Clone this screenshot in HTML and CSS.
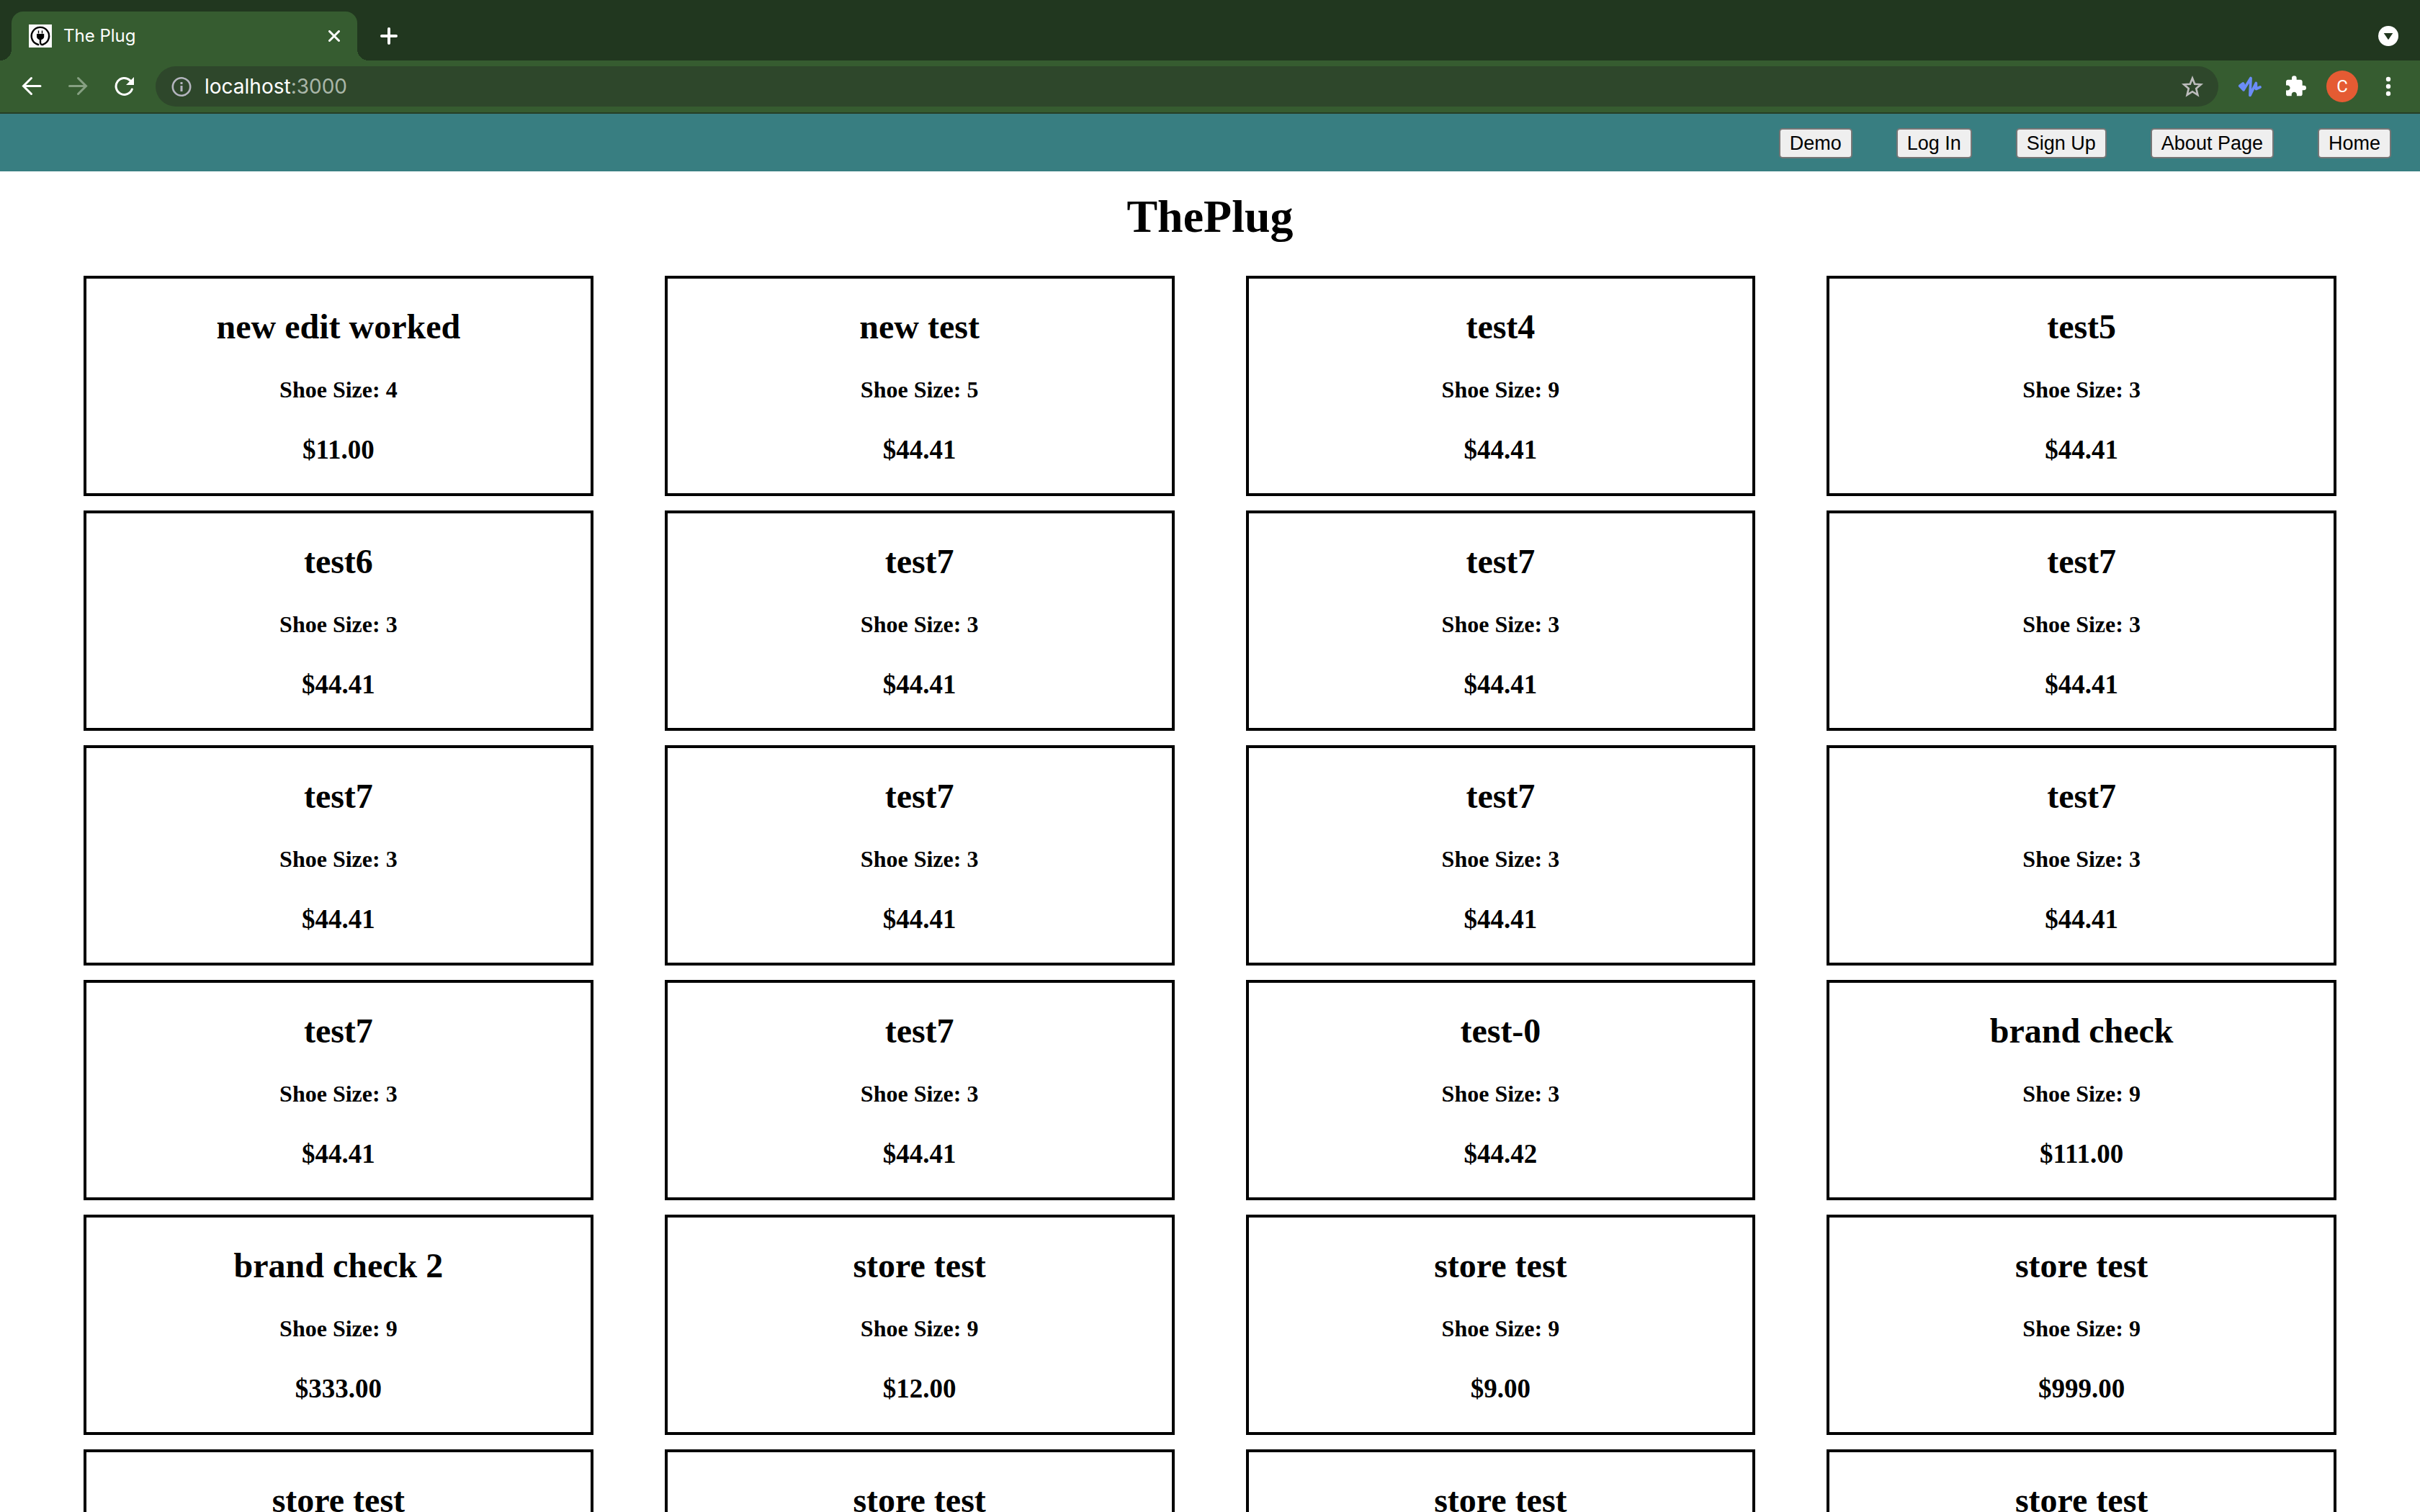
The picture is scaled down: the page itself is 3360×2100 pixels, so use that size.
FILE: index.html
```html
<!DOCTYPE html>
<html lang="en">
<head>
<meta charset="utf-8">
<title>The Plug</title>
<link rel="stylesheet" href="styles.css">
</head>
<body>
<header class="browser">
  <div class="tabstrip">
    <div class="tab">
      <svg class="favicon" viewBox="0 0 32 32" aria-hidden="true">
        <rect width="32" height="32" fill="#fafafa"/>
        <path d="M13.200 28A12.200 12.200 0 1 1 20 27.600C17.500 29 15.600 27 16 24V20" fill="none" stroke="#000" stroke-width="2.400" stroke-linecap="round"/>
        <path d="M13.500 8.500v4M18.500 8.500v4" stroke="#000" stroke-width="1.400"/>
        <path d="M11 13h10.200V17c0 2.500-2.500 4-5.100 4.800-2.600-.8-5.100-2.300-5.100-4.800z" fill="#000"/>
      </svg>
      <span class="tab-title">The Plug</span>
      <button class="icon-button" type="button" aria-label="Close tab">
        <svg class="icon-small" viewBox="0 0 16 16"><path d="M1.500 1.500l13 13M14.500 1.500l-13 13" fill="none" stroke="#fff" stroke-width="3" stroke-linecap="round"/></svg>
      </button>
    </div>
    <button class="icon-button new-tab" type="button" aria-label="New tab">
      <svg class="icon" viewBox="0 0 28 28"><path d="M14 4v20M4 14h20" fill="none" stroke="#fff" stroke-width="4" stroke-linecap="round"/></svg>
    </button>
    <button class="icon-button tab-search" type="button" aria-label="Search tabs">
      <svg class="icon" viewBox="0 0 28 28"><circle cx="14" cy="14" r="14" fill="#fff"/><path d="M7.700 10h12.600L14 19.300z" fill="#21371f"/></svg>
    </button>
  </div>
  <div class="toolbar">
    <div class="history">
      <button class="icon-button" type="button" aria-label="Back">
        <svg class="icon" viewBox="0 0 28 28"><path d="M26 13.500H3M13.500 2.500L2.500 13.500 13.500 24.500" fill="none" stroke="#fff" stroke-width="3" stroke-linecap="round"/></svg>
      </button>
      <button class="icon-button" type="button" aria-label="Forward">
        <svg class="icon" viewBox="0 0 28 28"><path d="M2.500 13.500H25M14.500 2.500L25.500 13.500 14.500 24.500" fill="none" stroke="#86a082" stroke-width="3" stroke-linecap="round"/></svg>
      </button>
      <button class="icon-button" type="button" aria-label="Reload">
        <svg class="icon" viewBox="0 0 28 28"><path d="M25.300 18A11.500 11.500 0 1 1 22.500 5.600" fill="none" stroke="#fff" stroke-width="3" stroke-linecap="round"/><path d="M28 1v11H17z" fill="#fff"/></svg>
      </button>
    </div>
    <div class="omnibox">
      <svg class="icon" viewBox="0 0 28 28" aria-hidden="true"><circle cx="14" cy="14.500" r="12.200" fill="none" stroke="#b4b5bf" stroke-width="2.600"/><path d="M14 13V21M14 8v3" stroke="#b4b5bf" stroke-width="3"/></svg>
      <span class="url">localhost<span class="port">:3000</span></span>
      <button class="icon-button" type="button" aria-label="Bookmark this page">
        <svg class="icon-large" viewBox="0 0 32 32"><path d="M16 4.500l3.200 8.200 8.600.6-6.600 5.600 2.200 9L16 23.200l-7.400 4.700 2.200-9-6.600-5.600 8.600-.6z" fill="none" stroke="#bdbdbd" stroke-width="2.600"/></svg>
      </button>
    </div>
    <div class="extensions">
      <button class="icon-button" type="button" aria-label="Audio extension">
        <svg class="icon-wave" viewBox="0 0 36 32"><path d="M3.800 15.300L8.200 12 9 20.800 3.800 15.300 8 16M9 20.800L19 4.500 18 28.300 26.300 11.500 26.500 19.500 32 17M9.500 19.500L9 13" fill="none" stroke="#6b8cf7" stroke-width="3.800" stroke-linecap="round" stroke-linejoin="round"/></svg>
      </button>
      <button class="icon-button" type="button" aria-label="Extensions">
        <svg class="icon-large" viewBox="-1 0 24 24"><path d="M20.500 11H19V7c0-1.100-.9-2-2-2h-4V3.500a2.500 2.500 0 0 0-5 0V5H4c-1.100 0-1.990.9-1.990 2v3.800H3.500c1.490 0 2.700 1.210 2.700 2.700s-1.210 2.700-2.700 2.700H2V20c0 1.100.9 2 2 2h3.800v-1.500c0-1.490 1.210-2.700 2.700-2.700s2.700 1.210 2.700 2.700V22H17c1.100 0 2-.9 2-2v-4h1.500a2.500 2.500 0 0 0 0-5z" fill="#fff"/></svg>
      </button>
      <button class="avatar" type="button">C</button>
      <button class="icon-button" type="button" aria-label="Menu">
        <svg class="icon" viewBox="0 0 28 28"><g fill="#fff"><circle cx="14" cy="4" r="3.200"/><circle cx="14" cy="14" r="3.200"/><circle cx="14" cy="24" r="3.200"/></g></svg>
      </button>
    </div>
  </div>
</header>
<nav class="site-nav">
  <button type="button">Demo</button>
  <button type="button">Log In</button>
  <button type="button">Sign Up</button>
  <button type="button">About Page</button>
  <button type="button">Home</button>
</nav>
<main class="page">
  <h1>ThePlug</h1>
  <div class="listings">
    <article class="card"><h2>new edit worked</h2><h4>Shoe Size: 4</h4><h3>$11.00</h3></article>
    <article class="card"><h2>new test</h2><h4>Shoe Size: 5</h4><h3>$44.41</h3></article>
    <article class="card"><h2>test4</h2><h4>Shoe Size: 9</h4><h3>$44.41</h3></article>
    <article class="card"><h2>test5</h2><h4>Shoe Size: 3</h4><h3>$44.41</h3></article>
    <article class="card"><h2>test6</h2><h4>Shoe Size: 3</h4><h3>$44.41</h3></article>
    <article class="card"><h2>test7</h2><h4>Shoe Size: 3</h4><h3>$44.41</h3></article>
    <article class="card"><h2>test7</h2><h4>Shoe Size: 3</h4><h3>$44.41</h3></article>
    <article class="card"><h2>test7</h2><h4>Shoe Size: 3</h4><h3>$44.41</h3></article>
    <article class="card"><h2>test7</h2><h4>Shoe Size: 3</h4><h3>$44.41</h3></article>
    <article class="card"><h2>test7</h2><h4>Shoe Size: 3</h4><h3>$44.41</h3></article>
    <article class="card"><h2>test7</h2><h4>Shoe Size: 3</h4><h3>$44.41</h3></article>
    <article class="card"><h2>test7</h2><h4>Shoe Size: 3</h4><h3>$44.41</h3></article>
    <article class="card"><h2>test7</h2><h4>Shoe Size: 3</h4><h3>$44.41</h3></article>
    <article class="card"><h2>test7</h2><h4>Shoe Size: 3</h4><h3>$44.41</h3></article>
    <article class="card"><h2>test-0</h2><h4>Shoe Size: 3</h4><h3>$44.42</h3></article>
    <article class="card"><h2>brand check</h2><h4>Shoe Size: 9</h4><h3>$111.00</h3></article>
    <article class="card"><h2>brand check 2</h2><h4>Shoe Size: 9</h4><h3>$333.00</h3></article>
    <article class="card"><h2>store test</h2><h4>Shoe Size: 9</h4><h3>$12.00</h3></article>
    <article class="card"><h2>store test</h2><h4>Shoe Size: 9</h4><h3>$9.00</h3></article>
    <article class="card"><h2>store test</h2><h4>Shoe Size: 9</h4><h3>$999.00</h3></article>
    <article class="card"><h2>store test</h2></article>
    <article class="card"><h2>store test</h2></article>
    <article class="card"><h2>store test</h2></article>
    <article class="card"><h2>store test</h2></article>
  </div>
</main>
</body>
</html>
```
FILE: styles.css
```css
* {
  box-sizing: border-box;
}

body {
  display: flex;
  flex-direction: column;
  height: 100vh;
  margin: 0;
  overflow: hidden;
  background: #fff;
  color: #000;
  font-family: "Liberation Serif", "Times New Roman", serif;
}

svg {
  display: block;
  flex: none;
}

/* Browser window */
.browser {
  flex: none;
  border-bottom: 2px solid #263f26;
  background: #365c30;
  color: #fff;
  font-family: Inter, Roboto, sans-serif;
}

.icon-button {
  display: flex;
  flex: none;
  padding: 0;
  border: 0;
  background: none;
}

.icon-small {
  width: 16px;
  height: 16px;
}

.icon {
  width: 28px;
  height: 28px;
}

.icon-large {
  width: 32px;
  height: 32px;
}

.icon-wave {
  width: 36px;
  height: 32px;
}

.tabstrip {
  display: flex;
  align-items: center;
  height: 84px;
  padding: 16px 30px 0 16px;
  background: #21371f;
}

.tab {
  position: relative;
  display: flex;
  align-items: center;
  gap: 16px;
  width: 480px;
  height: 68px;
  padding: 0 24px;
  border-radius: 16px 16px 0 0;
  background: #365c30;
}

/* Curved feet where the tab meets the toolbar */
.tab::before,
.tab::after {
  position: absolute;
  bottom: 0;
  width: 16px;
  height: 16px;
  content: "";
}

.tab::before {
  right: 100%;
  background: radial-gradient(circle at 0 0, #21371f 16px, #365c30 16px);
}

.tab::after {
  left: 100%;
  background: radial-gradient(circle at 100% 0, #21371f 16px, #365c30 16px);
}

.favicon {
  width: 32px;
  height: 32px;
}

.tab-title {
  flex: 1;
  font-size: 24px;
  line-height: 32px;
}

.new-tab {
  margin-left: 30px;
}

.tab-search {
  margin-left: auto;
}

.toolbar {
  display: flex;
  align-items: center;
  gap: 26px;
  height: 72px;
  padding: 0 30px;
}

.history {
  display: flex;
  gap: 36px;
  margin-right: 4px;
}

.omnibox {
  display: flex;
  flex: 1;
  align-items: center;
  gap: 18px;
  height: 56px;
  padding: 0 20px 0 22px;
  border-radius: 28px;
  background: #2e472b;
}

.url {
  flex: 1;
  font-size: 28px;
  line-height: 36px;
}

.port {
  color: #a9b6a8;
}

.extensions {
  display: flex;
  align-items: center;
  gap: 28px;
}

.avatar {
  width: 44px;
  height: 44px;
  padding: 0;
  border: 0;
  border-radius: 50%;
  background: #e55b33;
  color: #fff;
  font-family: Roboto, sans-serif;
  font-size: 24px;
  line-height: 44px;
}

/* Site */
.site-nav {
  display: flex;
  flex: none;
  align-items: center;
  justify-content: flex-end;
  gap: 61px;
  height: 80px;
  padding: 2px 40px 0;
  background: #387e81;
}

.site-nav button {
  height: 42px;
  padding: 0 13px;
  border: 2px solid #767676;
  border-radius: 5px;
  background: #efefef;
  color: #000;
  font-family: "Liberation Sans", Arial, sans-serif;
  font-size: 27px;
  line-height: 38px;
}

.page {
  flex: 1;
  min-height: 0;
  overflow: hidden;
}

h1,
h2,
h3,
h4 {
  margin: 0;
  font-weight: bold;
  text-align: center;
}

h1 {
  margin: 26px 0 45px;
  font-size: 64px;
  line-height: 74px;
}

.listings {
  display: grid;
  grid-template-columns: repeat(4, 1fr);
  gap: 20px 99px;
  padding: 0 116px;
}

.card {
  min-height: 306px;
  padding: 39px 0;
  border: 4px solid #000;
}

h2 {
  margin-bottom: 41px;
  font-size: 48px;
  line-height: 56px;
}

h3 {
  font-size: 37px;
  line-height: 42px;
}

h4 {
  margin-bottom: 45px;
  font-size: 32px;
  line-height: 36px;
}
```
